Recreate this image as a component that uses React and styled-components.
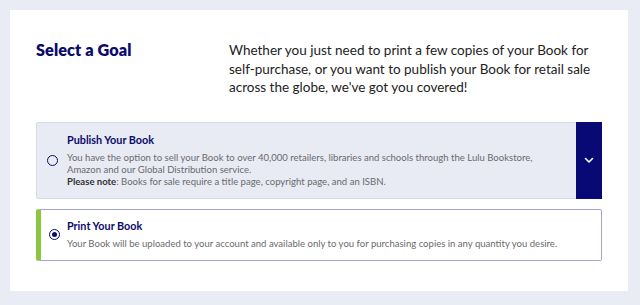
import React, { useState } from "react";
import styled, { createGlobalStyle } from "styled-components";

const GlobalStyle = createGlobalStyle`
  html, body {
    margin: 0;
    padding: 0;
    background: #e9ebf5;
  }
  body {
    font-family: Lato, "Open Sans", sans-serif;
  }
`;

const Page = styled.div`
  padding: 10px 12px 14px 10px;
  height: 305px;
  box-sizing: border-box;
`;

const Card = styled.section`
  background: #ffffff;
  height: 281px;
  box-sizing: border-box;
  padding: 30px 26px 0 26px;
`;

const Intro = styled.div`
  display: grid;
  grid-template-columns: 193px 1fr;
  margin-bottom: 25px;
`;

const Heading = styled.h2`
  margin: 0;
  font-size: 16.2px;
  font-weight: 800;
  color: #0b0b6b;
  letter-spacing: 0.1px;
`;

const Lead = styled.p`
  margin: 0;
  padding-top: 1px;
  font-size: 13.5px;
  letter-spacing: 0;
  line-height: 18.5px;
  color: #222;
  white-space: nowrap;
`;

const Options = styled.div`
  display: flex;
  flex-direction: column;
  gap: 10px;
  width: 566px;
`;

const Option = styled.label`
  display: flex;
  align-items: stretch;
  box-sizing: border-box;
  cursor: pointer;
  background: ${(p) => (p.$selected ? "#ffffff" : "#e8eaf4")};
  border: 1px solid ${(p) => (p.$selected ? "#a4a4d2" : "#d9dbe8")};
  border-left: ${(p) => (p.$selected ? "5px solid #8cc63f" : "1px solid #d9dbe8")};
  border-radius: 2px;
  min-height: ${(p) => p.$height}px;
`;

const RadioCell = styled.div`
  display: flex;
  align-items: center;
  justify-content: center;
  width: ${(p) => (p.$selected ? 26 : 30)}px;
  flex: none;
`;

const Radio = styled.span`
  width: 9px;
  height: 9px;
  border-radius: 50%;
  border: 1.5px solid #0b0b6b;
  display: flex;
  align-items: center;
  justify-content: center;
  &::after {
    content: "";
    width: 5px;
    height: 5px;
    border-radius: 50%;
    background: #0b0b6b;
    display: ${(p) => (p.$checked ? "block" : "none")};
  }
`;

const Body = styled.div`
  flex: 1;
  padding: ${(p) => p.$pad};
`;

const Title = styled.div`
  font-size: 10.8px;
  font-weight: 700;
  color: #0b0b6b;
  margin-bottom: 6px;
`;

const Desc = styled.div`
  font-size: 9.55px;
  line-height: 12px;
  color: #6b6b6b;
  b {
    color: #333;
    font-weight: 700;
  }
`;

const Toggle = styled.div`
  width: 26px;
  flex: none;
  background: #090976;
  display: flex;
  align-items: center;
  justify-content: center;
  margin: -1px -1px -1px 0;
`;

export default function App() {
  const [goal, setGoal] = useState("print");
  return (
    <Page>
      <GlobalStyle />
      <Card>
        <Intro>
          <Heading>Select a Goal</Heading>
          <Lead>
            Whether you just need to print a few copies of your Book for
            <br />
            self-purchase, or you want to publish your Book for retail sale
            <br />
            across the globe, we've got you covered!
          </Lead>
        </Intro>
        <Options>
          <Option $selected={goal === "publish"} $height={77} onClick={() => setGoal("publish")}>
            <RadioCell $selected={goal === "publish"}>
              <Radio $checked={goal === "publish"} />
            </RadioCell>
            <Body $pad="10px 0 8px 0">
              <Title>Publish Your Book</Title>
              <Desc>
                You have the option to sell your Book to over 40,000 retailers, libraries and schools through the Lulu Bookstore,
                <br />
                Amazon and our Global Distribution service.
                <br />
                <b>Please note</b>: Books for sale require a title page, copyright page, and an ISBN.
              </Desc>
            </Body>
            <Toggle>
              <svg width="10" height="7" viewBox="0 0 10 7" fill="none">
                <path d="M1.5 1.5 L5 5 L8.5 1.5" stroke="#fff" strokeWidth="1.6" strokeLinecap="round" strokeLinejoin="round" />
              </svg>
            </Toggle>
          </Option>
          <Option $selected={goal === "print"} $height={52} onClick={() => setGoal("print")}>
            <RadioCell $selected={goal === "print"}>
              <Radio $checked={goal === "print"} />
            </RadioCell>
            <Body $pad="9px 0 8px 0">
              <Title>Print Your Book</Title>
              <Desc>
                Your Book will be uploaded to your account and available only to you for purchasing copies in any quantity you desire.
              </Desc>
            </Body>
          </Option>
        </Options>
      </Card>
    </Page>
  );
}
